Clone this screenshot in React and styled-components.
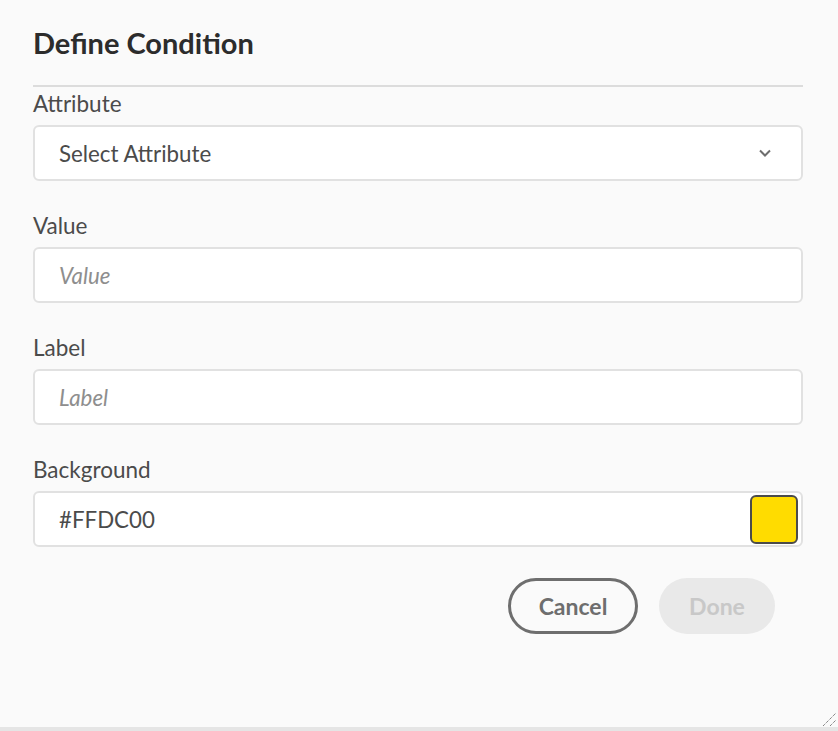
import React from "react";
import styled, { createGlobalStyle } from "styled-components";

const GlobalStyle = createGlobalStyle`
  html, body {
    margin: 0;
    padding: 0;
    background: #fafafa;
  }
  body {
    font-family: "Lato", "Open Sans", sans-serif;
    color: #2c2c2c;
  }
`;

const Screen = styled.div`
  height: 100vh;
  display: flex;
  flex-direction: column;
  position: relative;
`;

const Dialog = styled.div`
  flex: 1;
  padding: 0 35px 0 33px;
`;

const Header = styled.div`
  height: 87px;
  display: flex;
  align-items: center;
  border-bottom: 2px solid #dcdcdc;
  box-sizing: border-box;
`;

const Title = styled.h2`
  margin: 0;
  font-size: 29px;
  font-weight: 700;
  color: #2c2c2c;
`;

const Form = styled.div`
  display: flex;
  flex-direction: column;
  gap: 28px;
`;

const Field = styled.div`
  display: flex;
  flex-direction: column;
`;

const Label = styled.label`
  height: 38px;
  line-height: 34px;
  font-size: 22.5px;
  color: #4b4b4b;
`;

const Box = styled.div`
  height: 56px;
  box-sizing: border-box;
  display: flex;
  align-items: center;
  justify-content: space-between;
  background: #fff;
  border: 2px solid #e1e1e1;
  border-radius: 6px;
  padding: 0 3px 0 24px;
  font-size: 22.3px;
  color: #4b4b4b;
`;

const Placeholder = styled.span`
  font-style: italic;
  color: #8e8e8e;
`;

const Chevron = styled.svg`
  width: 14px;
  height: 10px;
  margin-right: 26px;
`;

const Swatch = styled.div`
  width: 48px;
  height: 49px;
  box-sizing: border-box;
  border: 2px solid #4b4b4b;
  border-radius: 6px;
  background: ${(p) => p.color};
`;

const Actions = styled.div`
  display: flex;
  justify-content: flex-end;
  gap: 21px;
  margin-top: 31px;
  padding-right: 28px;
`;

const Button = styled.button`
  height: 56px;
  box-sizing: border-box;
  border-radius: 28px;
  font-family: inherit;
  font-size: 23px;
  font-weight: 700;
  padding: 0;
  width: ${(p) => p.w}px;
  border: ${(p) => (p.outline ? "3px solid #6e6e6e" : "none")};
  background: ${(p) => (p.outline ? "transparent" : "#e9e9e9")};
  color: ${(p) => (p.outline ? "#6e6e6e" : "#c8c8c8")};
`;

const BottomBar = styled.div`
  height: 4px;
  background: #e5e5e5;
`;

const Grip = styled.svg`
  position: absolute;
  right: 1px;
  bottom: 4px;
  width: 15px;
  height: 15px;
`;

export default function App() {
  return (
    <Screen>
      <GlobalStyle />
      <Dialog>
        <Header>
          <Title>Define Condition</Title>
        </Header>
        <Form>
          <Field>
            <Label>Attribute</Label>
            <Box>
              <span>Select Attribute</span>
              <Chevron viewBox="0 0 14 10">
                <path d="M2 2.5 L7 7.5 L12 2.5" fill="none" stroke="#6e6e6e" strokeWidth="2" />
              </Chevron>
            </Box>
          </Field>
          <Field>
            <Label>Value</Label>
            <Box>
              <Placeholder>Value</Placeholder>
            </Box>
          </Field>
          <Field>
            <Label>Label</Label>
            <Box>
              <Placeholder>Label</Placeholder>
            </Box>
          </Field>
          <Field>
            <Label>Background</Label>
            <Box>
              <span>#FFDC00</span>
              <Swatch color="#FFDC00" />
            </Box>
          </Field>
        </Form>
        <Actions>
          <Button outline w={130}>Cancel</Button>
          <Button w={116}>Done</Button>
        </Actions>
      </Dialog>
      <BottomBar />
      <Grip viewBox="0 0 15 15">
        <path d="M1 14 L14 1 M8 14 L14 8" stroke="#555" strokeWidth="1" strokeDasharray="1 1" />
      </Grip>
    </Screen>
  );
}
